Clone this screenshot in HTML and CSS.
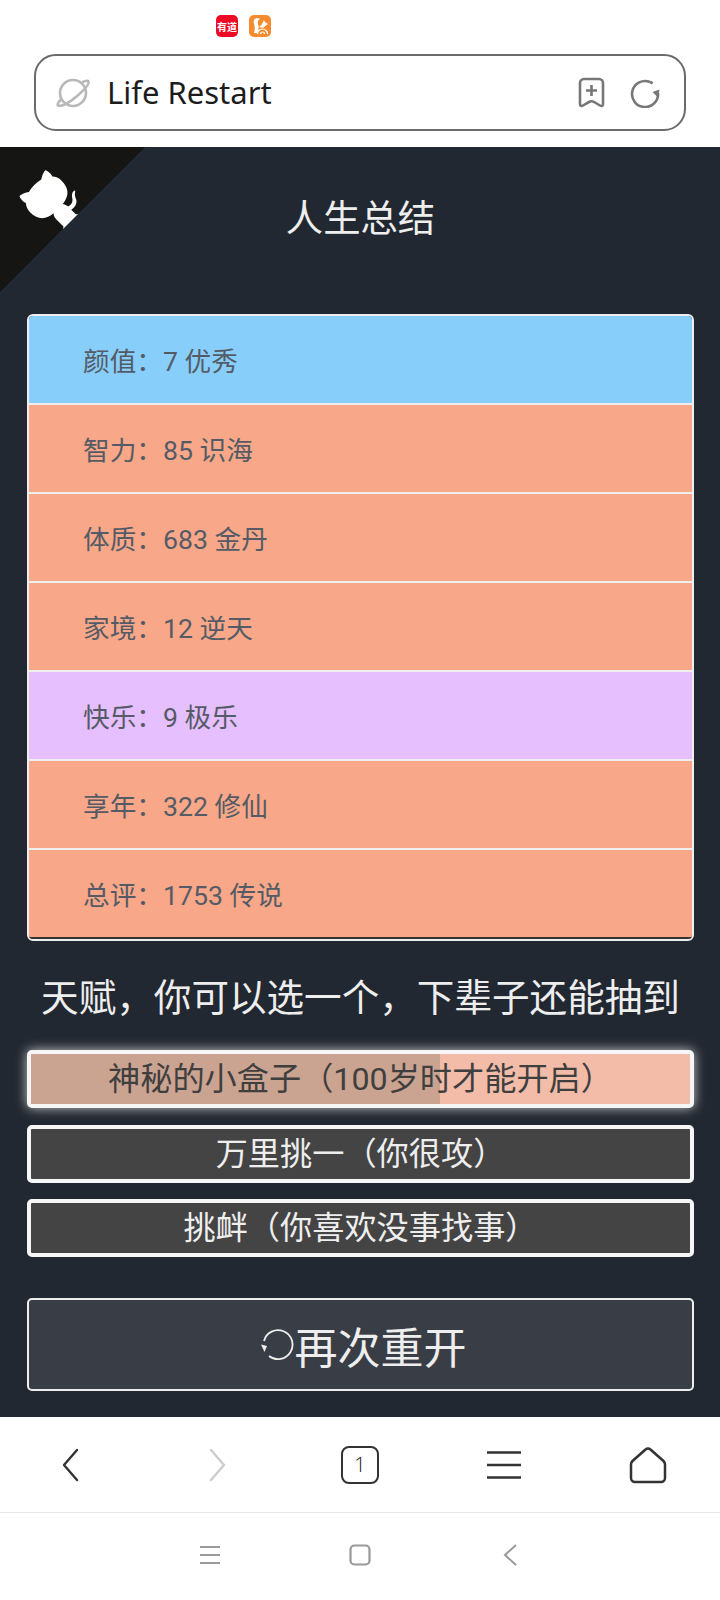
FILE: index.html
```html
<!DOCTYPE html>
<html lang="zh-CN">
<head>
    <meta charset="UTF-8">
    <meta name="viewport" content="width=device-width, initial-scale=1.0">
    <title>Life Restart</title>
    <link rel="stylesheet" href="styles.css">
</head>
<body>
    <!-- Browser top -->
    <header class="top">
        <div class="apps">
            <span class="app app-red">有道</span>
            <span class="app app-orange">
                <svg viewBox="0 0 22 22" width="22" height="22"><path d="M9 3C5 3 4 6 5 9c1 3 1 5 0 9h3c2-3 2-6 1-9-.5-2 0-4 2-5z" fill="#fff"/><path d="M10 12c2-1 3-3 4-5l1-2 1 2 3 2-3 2c-1 2-3 2-6 1z" fill="#fff"/><path d="M8.500 19a5 5 0 0 1 10 0M11.500 19a2 2 0 0 1 4 0" fill="none" stroke="#fff" stroke-width="1.200"/></svg>
            </span>
        </div>
        <div class="urlbar">
            <svg class="planet" viewBox="0 0 36 36" width="36" height="36"><circle cx="18" cy="18" r="13" fill="none" stroke="#b8b8b8" stroke-width="2.600"/><path d="M28 7c3-1.500 5-1.500 5.500-.5 1 2.500-5 9-12.500 15.500S5.500 32 3 30.500c-1-1 .5-3.500 3-6" fill="none" stroke="#b8b8b8" stroke-width="2.600" stroke-linecap="round"/></svg>
            <span class="urltext">Life Restart</span>
            <svg class="bookmark" viewBox="0 0 27 31" width="27" height="31"><path d="M6 2h15a4 4 0 0 1 4 4v21c0 2-1.500 2.500-3 1.500l-6-3.500c-1.800-1-3.200-1-5 0l-6 3.500c-1.500 1-3 .5-3-1.500V6a4 4 0 0 1 4-4z" fill="none" stroke="#777" stroke-width="2.600" stroke-linejoin="round"/><path d="M13.500 8v11M8 13.500h11" stroke="#777" stroke-width="2.600"/></svg>
            <svg class="reload" viewBox="0 0 30 30" width="30" height="30"><path d="M20 4A13 13 0 1 0 28 15" fill="none" stroke="#777" stroke-width="2.600"/><path d="M20 4c3 1 6 3.500 7.500 7" fill="none" stroke="#777" stroke-width="2.600" stroke-dasharray="3 20"/><path d="M29.500 11.500l-1.500 8-5.500-5.500z" fill="#777"/></svg>
        </div>
    </header>

    <!-- Game page -->
    <main class="game">
        <svg class="corner" viewBox="0 0 250 250" width="145" height="145">
            <path d="M0,0 L115,115 L130,115 L142,142 L250,250 L250,0 Z" fill="#151513"/>
            <path d="M128.3,109.0 C113.8,99.7 119.0,89.6 119.0,89.6 C122.0,82.7 120.5,78.6 120.5,78.6 C119.2,72.0 123.4,76.3 123.4,76.3 C127.3,80.9 125.5,87.3 125.5,87.3 C122.9,97.6 130.6,101.9 134.4,103.2" fill="#fff"/>
            <path d="M115.0,115.0 C114.9,115.1 118.7,116.5 119.8,115.4 L133.7,101.6 C136.9,99.2 139.9,98.4 142.2,98.6 C133.8,88.0 127.5,74.4 143.8,58.0 C148.5,53.4 154.0,51.2 159.7,51.0 C160.3,49.4 163.2,43.6 171.4,40.1 C171.4,40.1 176.1,42.5 178.8,56.2 C183.1,58.6 187.2,61.8 190.9,65.4 C194.5,69.0 197.7,73.2 200.1,77.6 C213.8,80.2 216.3,84.9 216.3,84.9 C212.7,93.1 206.9,96.0 205.4,96.6 C205.1,102.4 203.0,107.8 198.3,112.5 C181.9,128.9 168.3,122.5 157.7,114.1 C157.9,116.9 156.7,120.9 152.7,124.9 L141.0,136.5 C139.8,137.7 141.6,141.9 141.8,141.8 Z" fill="#fff"/>
        </svg>

        <h1 class="title">人生总结</h1>

        <ul class="stats">
            <li class="stat blue">颜值：7 优秀</li>
            <li class="stat orange">智力：85 识海</li>
            <li class="stat orange">体质：683 金丹</li>
            <li class="stat orange">家境：12 逆天</li>
            <li class="stat purple">快乐：9 极乐</li>
            <li class="stat orange">享年：322 修仙</li>
            <li class="stat orange">总评：1753 传说</li>
        </ul>

        <h2 class="subtitle">天赋，你可以选一个，下辈子还能抽到</h2>

        <div class="talents">
            <button class="talent selected">
                <span class="progress" style="width: 62.1%"></span>
                <span class="label">神秘的小盒子（100岁时才能开启）</span>
            </button>
            <button class="talent"><span class="label">万里挑一（你很攻）</span></button>
            <button class="talent"><span class="label">挑衅（你喜欢没事找事）</span></button>
        </div>

        <button class="again">
            <svg viewBox="0 0 34 32" width="34" height="32"><path d="M4 12A14.500 14.500 0 1 1 9 27" fill="none" stroke="#eee" stroke-width="1.800"/><path d="M1 15.500l6 1.500-2.500 6z" fill="#eee"/></svg>
            <span>再次重开</span>
        </button>
    </main>

    <!-- Browser toolbar -->
    <nav class="toolbar">
        <svg class="tool-back" viewBox="0 0 20 34" width="20" height="34"><path d="M17 2L4 17l13 15" fill="none" stroke="#333" stroke-width="2.400" stroke-linecap="round" stroke-linejoin="round"/></svg>
        <svg class="tool-forward" viewBox="0 0 20 34" width="20" height="34"><path d="M3 2l13 15L3 32" fill="none" stroke="#ccc" stroke-width="2.400" stroke-linecap="round" stroke-linejoin="round"/></svg>
        <span class="tabs">1</span>
        <svg viewBox="0 0 36 30" width="36" height="30"><path d="M1 2.500h34M1 15h34M1 27.500h34" stroke="#333" stroke-width="2.600"/></svg>
        <svg viewBox="0 0 38 38" width="38" height="38"><path d="M16.500 3.500a3.500 3.500 0 0 1 5 0L34.500 15q1.500 1.500 1.500 3.500V32a4 4 0 0 1-4 4H6a4 4 0 0 1-4-4V18.500q0-2 1.500-3.500z" fill="none" stroke="#333" stroke-width="2.500"/></svg>
    </nav>

    <!-- System nav -->
    <nav class="sysnav">
        <svg viewBox="0 0 22 20" width="22" height="20"><path d="M1 2h20M1 10h20M1 18h20" stroke="#999" stroke-width="2"/></svg>
        <svg viewBox="0 0 22 22" width="22" height="22"><rect x="1.500" y="1.500" width="19" height="19" rx="4" fill="none" stroke="#999" stroke-width="2.200"/></svg>
        <svg viewBox="0 0 16 24" width="16" height="24"><path d="M14 2L3 12l11 10" fill="none" stroke="#999" stroke-width="2"/></svg>
    </nav>
</body>
</html>
```

FILE: styles.css
```css
/* Global Styles */
* {
    box-sizing: border-box;
    margin: 0;
    padding: 0;
}

body {
    width: 720px;
    height: 1600px;
    display: flex;
    flex-direction: column;
    overflow: hidden;
    background-color: #fff;
    font-family: Roboto, "Noto Sans CJK SC", sans-serif;
}

/* Browser top */
.top {
    height: 147px;
    padding-top: 15px;
}

.apps {
    display: flex;
    gap: 11px;
    margin-left: 216px;
    height: 22px;
}

.app {
    width: 22px;
    height: 22px;
    border-radius: 5px;
    display: flex;
    align-items: center;
    justify-content: center;
}

.app-red {
    background-color: #ee0a24;
    color: #fff;
    font-size: 10px;
    font-weight: 700;
    white-space: nowrap;
}

.app-orange {
    background-color: #f58a2e;
}

.urlbar {
    height: 77px;
    margin: 17px 34px 0 34px;
    padding: 0 24px 0 19px;
    display: flex;
    align-items: center;
    border: 2px solid #6a6a6a;
    border-radius: 22px;
}

.urltext {
    flex: 1;
    margin: 0 0 2px 16px;
    font-family: "Noto Sans", sans-serif;
    font-size: 31px;
    color: #1c1c1c;
}

.reload {
    margin-left: 25px;
}

/* Game page */
.game {
    position: relative;
    height: 1270px;
    padding: 47px 26px 0 27px;
    background-color: #222831;
}

.corner {
    position: absolute;
    top: 0;
    left: 0;
    transform: scaleX(-1);
}

.title {
    height: 50px;
    margin-bottom: 70px;
    text-align: center;
    font-size: 37.33px;
    line-height: 50px;
    font-weight: 400;
    color: #eeeeee;
}

.stats {
    list-style: none;
    border: 2px solid #eeeeee;
    border-radius: 6px;
    overflow: hidden;
}

.stat {
    height: 89px;
    padding: 4px 0 0 54px;
    font-size: 26.67px;
    line-height: 84px;
    color: #555b66;
    border-bottom: 2px solid #eeeeee;
}

.stat:last-child {
    border-bottom-color: #333;
}

.blue {
    background-color: #87cefa;
}

.orange {
    background-color: #f8a888;
}

.purple {
    background-color: #e6bfff;
}

.subtitle {
    height: 50px;
    margin: 32px 0 27px;
    text-align: center;
    font-size: 37.6px;
    line-height: 50px;
    font-weight: 400;
    color: #eeeeee;
    white-space: nowrap;
}

/* Talent buttons */
.talents {
    display: flex;
    flex-direction: column;
    gap: 16.5px;
}

.talent {
    position: relative;
    height: 58px;
    border: 4px solid #f6f6f6;
    border-radius: 5px;
    background-color: #444444;
    color: #eeeeee;
    font-family: inherit;
    font-size: 32.2px;
    line-height: 48px;
    overflow: hidden;
}

.talent.selected {
    background-color: #f2bca8;
    color: #3f3f3f;
    box-shadow: 0 0 12px rgba(255, 255, 255, 0.75);
    overflow: visible;
}

.progress {
    position: absolute;
    top: 0;
    left: 0;
    bottom: 0;
    background-color: #cba391;
}

.label {
    position: relative;
}

.again {
    width: 100%;
    height: 93px;
    margin-top: 41px;
    padding-left: 5px;
    display: flex;
    align-items: center;
    justify-content: center;
    gap: 1px;
    border: 2px solid #eeeeee;
    border-radius: 5px;
    background-color: #393e46;
    color: #eeeeee;
    font-family: inherit;
    font-size: 43px;
}

/* Bottom bars */
.toolbar {
    height: 96px;
    display: grid;
    grid-template-columns: repeat(5, 1fr);
    align-items: center;
    justify-items: center;
    border-bottom: 1px solid #e8e8e8;
}

.tool-back {
    margin-right: 4px;
}

.tool-forward {
    margin-left: 4px;
}

.tabs {
    width: 38px;
    height: 38px;
    border: 2.5px solid #333;
    border-radius: 8px;
    text-align: center;
    font-family: "Open Sans", sans-serif;
    font-size: 21px;
    font-weight: 300;
    line-height: 33px;
    color: #222;
}

.sysnav {
    flex: 1;
    padding-bottom: 4px;
    display: grid;
    grid-template-columns: repeat(3, 150px);
    align-items: center;
    justify-items: center;
    justify-content: center;
}
```
